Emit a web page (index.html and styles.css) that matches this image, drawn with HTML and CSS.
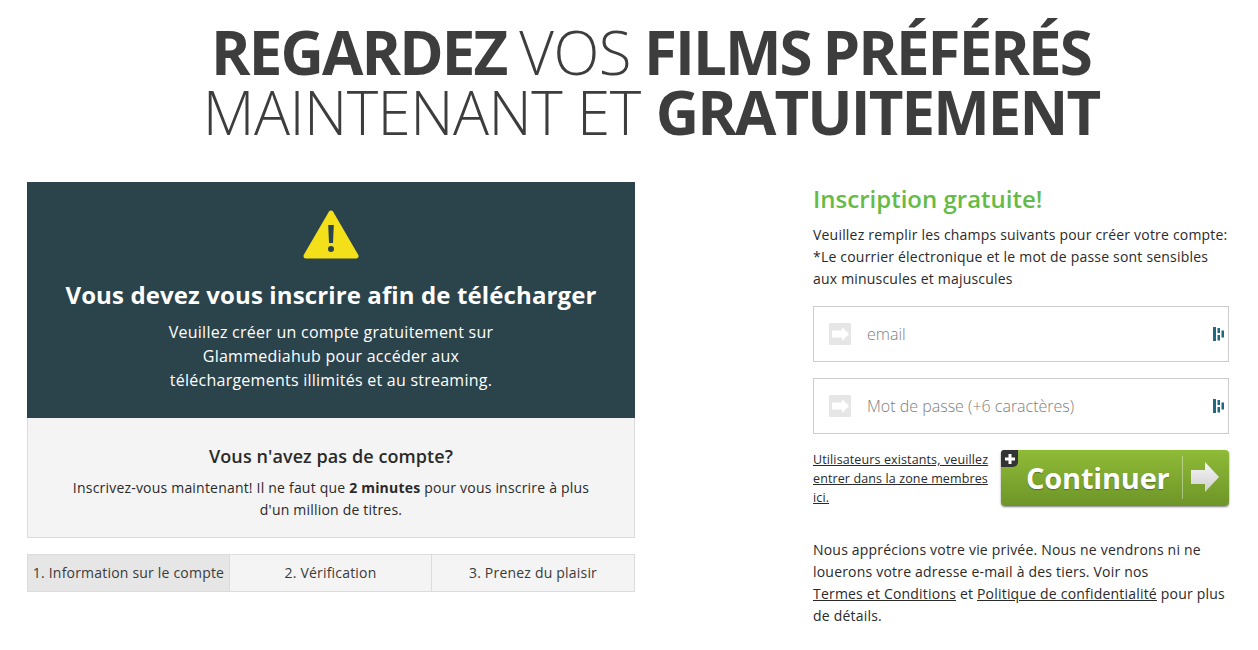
FILE: index.html
```html
<!DOCTYPE html>
<html lang="fr">
<head>
    <meta charset="UTF-8">
    <title>Inscription gratuite</title>
    <link rel="stylesheet" href="styles.css">
</head>
<body>
    <!-- Titre -->
    <h1 class="headline">
        <span class="headline-line headline-tight"><b>REGARDEZ</b> VOS <b>FILMS PRÉFÉRÉS</b></span>
        <span class="headline-line">MAINTENANT ET <b>GRATUITEMENT</b></span>
    </h1>

    <div class="content">
        <!-- Colonne gauche -->
        <div class="left-col">
            <div class="notice">
                <svg class="warning-icon" width="56" height="50" viewBox="0 0 56 50">
                    <path d="M28 3 L53 46 H3 Z" fill="#f4e01a" stroke="#f4e01a" stroke-width="5" stroke-linejoin="round"/>
                    <path d="M25.2 15 H30.8 L30 33 H26 Z" fill="#2b434b"/>
                    <circle cx="28" cy="39" r="3" fill="#2b434b"/>
                </svg>
                <h2 class="notice-title">Vous devez vous inscrire afin de télécharger</h2>
                <p class="notice-text">Veuillez créer un compte gratuitement sur<br>Glammediahub pour accéder aux<br>téléchargements illimités et au streaming.</p>
            </div>
            <div class="no-account">
                <h3 class="no-account-title">Vous n'avez pas de compte?</h3>
                <p class="no-account-text">Inscrivez-vous maintenant! Il ne faut que <b>2 minutes</b> pour vous inscrire à plus<br>d'un million de titres.</p>
            </div>
            <div class="steps">
                <div class="step step-active">1. Information sur le compte</div>
                <div class="step">2. Vérification</div>
                <div class="step">3. Prenez du plaisir</div>
            </div>
        </div>

        <!-- Colonne droite -->
        <div class="right-col">
            <h2 class="signup-title">Inscription gratuite!</h2>
            <p class="signup-text">Veuillez remplir les champs suivants pour créer votre compte:<br>*Le courrier électronique et le mot de passe sont sensibles<br>aux minuscules et majuscules</p>

            <div class="field">
                <span class="field-arrow">
                    <svg width="17" height="14" viewBox="0 0 17 14"><path d="M0 3.500 H10 V0 L17 7 L10 14 V10.500 H0 Z" fill="#fff"/></svg>
                </span>
                <input class="field-input" type="text" placeholder="email">
                <svg class="field-mark" width="11" height="14" viewBox="0 0 11 14">
                    <path d="M0 0 H3 V14 H0 Z M4.500 1 H7 V6 H4.500 Z M4.500 8 H7 V13.500 H4.500 Z M8.500 3.500 H11 V10.500 H8.500 Z" fill="#1f6a7c"/>
                </svg>
            </div>
            <div class="field">
                <span class="field-arrow">
                    <svg width="17" height="14" viewBox="0 0 17 14"><path d="M0 3.500 H10 V0 L17 7 L10 14 V10.500 H0 Z" fill="#fff"/></svg>
                </span>
                <input class="field-input" type="password" placeholder="Mot de passe (+6 caractères)">
                <svg class="field-mark" width="11" height="14" viewBox="0 0 11 14">
                    <path d="M0 0 H3 V14 H0 Z M4.500 1 H7 V6 H4.500 Z M4.500 8 H7 V13.500 H4.500 Z M8.500 3.500 H11 V10.500 H8.500 Z" fill="#1f6a7c"/>
                </svg>
            </div>

            <div class="actions">
                <a class="members-link" href="#">Utilisateurs existants, veuillez entrer dans la zone membres ici.</a>
                <a class="continue-btn" href="#">
                    <span class="plus-badge">
                        <svg width="10" height="10" viewBox="0 0 10 10"><path d="M3.500 0 H6.500 V3.500 H10 V6.500 H6.500 V10 H3.500 V6.500 H0 V3.500 H3.500 Z" fill="#fff"/></svg>
                    </span>
                    <span class="continue-label">Continuer</span>
                    <span class="continue-arrow">
                        <svg width="28" height="30" viewBox="0 0 28 30">
                            <defs>
                                <linearGradient id="arrow-fill" x1="0" y1="0" x2="0" y2="1">
                                    <stop offset="0" stop-color="#f6f6f6"/>
                                    <stop offset="1" stop-color="#cfcfcf"/>
                                </linearGradient>
                            </defs>
                            <path d="M0 8 H14 V0 L28 15 L14 30 V22 H0 Z" fill="url(#arrow-fill)"/>
                        </svg>
                    </span>
                </a>
            </div>

            <p class="privacy">Nous apprécions votre vie privée. Nous ne vendrons ni ne louerons votre adresse e-mail à des tiers. Voir nos <a href="#">Termes et Conditions</a> et <a href="#">Politique de confidentialité</a> pour plus de détails.</p>
        </div>
    </div>
</body>
</html>
```

FILE: styles.css
```css
/* Общие стили */
body {
    font-family: 'Open Sans', sans-serif;
    margin: 0;
    padding: 0;
    background-color: #FFFFFF;
    color: #2a2a2a;
    overflow: hidden;
}

/* Титр */
.headline {
    margin: 0;
    padding: 22px 0 0 44px;
    height: 182px;
    box-sizing: border-box;
    color: #3d3d3d;
    font-size: 60px;
    font-weight: 300;
    line-height: 60px;
    letter-spacing: -0.55px;
    text-align: center;
}

.headline-line {
    display: block;
}

.headline-tight {
    word-spacing: -2px;
}

.headline b {
    font-weight: 700;
    letter-spacing: -1.9px;
}

.content {
    display: flex;
    justify-content: space-between;
    padding: 0 29px 0 27px;
}

/* Левая колонка */
.left-col {
    width: 608px;
}

.notice {
    height: 236px;
    box-sizing: border-box;
    padding-top: 28px;
    background-color: #2b434b;
    color: #fff;
    text-align: center;
}

.warning-icon {
    display: block;
    margin: 0 auto;
}

.notice-title {
    margin: 18px 0 0;
    font-size: 24px;
    font-weight: 700;
    letter-spacing: 0.12px;
    line-height: 34px;
}

.notice-text {
    margin: 8px 0 0;
    font-size: 16px;
    letter-spacing: 0.25px;
    line-height: 24px;
}

.no-account {
    height: 120px;
    box-sizing: border-box;
    padding-top: 24px;
    background-color: #f4f4f4;
    border: 1px solid #dcdcdc;
    border-top: 0;
    text-align: center;
}

.no-account-title {
    margin: 0;
    font-size: 18px;
    font-weight: 600;
    letter-spacing: 0.08px;
    line-height: 28px;
}

.no-account-text {
    margin: 7px 0 0;
    font-size: 14px;
    letter-spacing: 0.2px;
    line-height: 22px;
}

.steps {
    display: grid;
    grid-template-columns: 201px 202px 203px;
    height: 38px;
    margin-top: 16px;
    box-sizing: border-box;
    background-color: #f4f4f4;
    border: 1px solid #dcdcdc;
}

.step {
    display: flex;
    justify-content: center;
    align-items: center;
    padding-bottom: 2px;
    font-size: 14px;
    letter-spacing: 0.2px;
    color: #3a3a3a;
    border-left: 1px solid #dcdcdc;
}

.step:first-child {
    border-left: 0;
}

.step-active {
    background-color: #e6e6e6;
}

/* Правая колонка */
.right-col {
    width: 416px;
}

.signup-title {
    margin: 0;
    color: #66bb46;
    font-size: 24px;
    font-weight: 600;
    line-height: 33px;
}

.signup-text {
    margin: 9px 0 0;
    font-size: 14px;
    letter-spacing: 0.2px;
    line-height: 22px;
}

.field {
    display: flex;
    align-items: center;
    height: 56px;
    margin-top: 16px;
    box-sizing: border-box;
    padding: 0 4px 0 15px;
    border: 1px solid #cccccc;
}

.field-arrow {
    display: flex;
    justify-content: center;
    align-items: center;
    flex: none;
    width: 22px;
    height: 22px;
    background-color: #e6e6e6;
}

.field-input {
    flex: 1;
    min-width: 0;
    margin-left: 16px;
    padding: 0;
    border: 0;
    outline: 0;
    background: none;
    font-family: inherit;
    font-size: 16px;
    font-weight: 300;
}

.field-input::placeholder {
    color: #808080;
    opacity: 1;
}

.field-mark {
    flex: none;
}

.actions {
    display: flex;
    justify-content: space-between;
    align-items: flex-start;
    margin-top: 16px;
}

.members-link {
    width: 180px;
    color: #2a2a2a;
    font-size: 12.500px;
    letter-spacing: 0.12px;
    line-height: 19px;
}

.continue-btn {
    position: relative;
    display: flex;
    align-items: center;
    width: 228px;
    height: 56px;
    box-sizing: border-box;
    padding-bottom: 2px;
    background: linear-gradient(#8fbb37, #6e9528);
    border-radius: 4px;
    box-shadow: 0 1px 2px rgba(0, 0, 0, 0.5);
    color: #fff;
    text-decoration: none;
}

.plus-badge {
    position: absolute;
    top: 0;
    left: 0;
    display: flex;
    justify-content: center;
    align-items: center;
    width: 17px;
    height: 17px;
    background-color: #333;
    border-radius: 3px 0 5px 0;
}

.continue-label {
    margin-left: 25px;
    font-size: 29px;
    font-weight: 700;
    letter-spacing: -0.2px;
    text-shadow: 0 1px 1px rgba(0, 0, 0, 0.3);
}

.continue-arrow {
    display: flex;
    align-items: center;
    height: 43px;
    margin-left: 12px;
    padding-left: 8px;
    border-left: 1px solid rgba(255, 255, 255, 0.4);
}

.privacy {
    margin: 32px 0 0;
    font-size: 14px;
    letter-spacing: 0.2px;
    line-height: 22px;
}

.privacy a {
    color: #2a2a2a;
    white-space: nowrap;
}
```
